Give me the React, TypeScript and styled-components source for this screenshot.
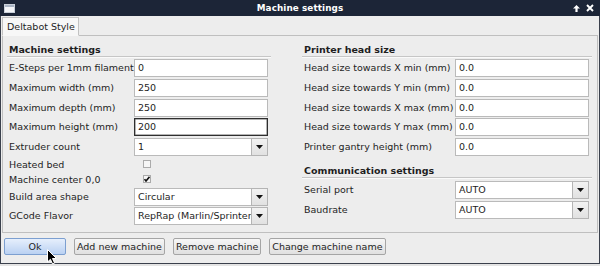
import styled, { createGlobalStyle, css } from 'styled-components'

const GlobalStyle = createGlobalStyle`
  html, body {
    margin: 0;
    padding: 0;
    background: #e4e4e4;
  }
  body {
    font-family: "DejaVu Sans", "Liberation Sans", sans-serif;
  }
`

const Window = styled.div`
  position: relative;
  width: 600px;
  height: 264px;
  display: flex;
  flex-direction: column;
  overflow: hidden;
`

const TitleBar = styled.div`
  height: 16px;
  flex: none;
  background: #1c2537;
  display: flex;
  align-items: center;
  justify-content: space-between;
  padding: 0 6px 0 4px;
  box-sizing: border-box;
  color: #fff;
`

const Title = styled.div`
  position: absolute;
  left: 0;
  right: 0;
  top: 0;
  height: 16px;
  line-height: 16px;
  text-align: center;
  font-size: 8.8px;
  font-weight: bold;
  letter-spacing: 0.1px;
  pointer-events: none;
`

const TitleButtons = styled.div`
  display: flex;
  align-items: center;
  gap: 6px;
`

const Body = styled.div`
  flex: 1;
  background: #ededed;
  border: 1px solid #3a404c;
  border-top: none;
  padding: 0 1px;
  display: flex;
  flex-direction: column;
`

const TabBar = styled.div`
  height: 19px;
  display: flex;
  align-items: flex-end;
  position: relative;
  z-index: 1;
`

const Tab = styled.div`
  height: 19px;
  box-sizing: border-box;
  padding: 0 3px 0 4px;
  background: #f7f7f7;
  border: 1px solid #c2c2c2;
  border-bottom: 1px solid #f7f7f7;
  margin-bottom: -1px;
  font-size: 9.5px;
  line-height: 18px;
  color: #1e1e1e;
`

const Panel = styled.div`
  height: 198px;
  box-sizing: border-box;
  border: 1px solid #bfbfbf;
  padding: 7px 5px 0 4px;
  display: grid;
  grid-template-columns: 264px 290px;
  column-gap: 31px;
  align-items: start;
`

const Column = styled.div`
  display: flex;
  flex-direction: column;
`

const Heading = styled.div<{ $spaced?: boolean }>`
  font-size: 9.5px;
  font-weight: bold;
  line-height: 13px;
  color: #1e1e1e;
  padding-left: 2px;
  border-bottom: 1px solid #c6c6c6;
  box-shadow: 0 1px 0 #fafafa;
  margin-top: ${p => (p.$spaced ? '8px' : '0')};
`

const Rows = styled.div<{ $labelWidth: number; $top?: number }>`
  display: grid;
  grid-template-columns: ${p => p.$labelWidth}px 134px;
  row-gap: 1.8px;
  margin-top: ${p => p.$top ?? 2}px;
`

const Label = styled.div<{ $short?: boolean }>`
  font-size: 9.5px;
  color: #1e1e1e;
  padding-left: 2px;
  height: ${p => (p.$short ? 13 : 18)}px;
  line-height: ${p => (p.$short ? 13 : 18)}px;
  white-space: nowrap;
`

const Field = styled.div<{ $focused?: boolean }>`
  height: 18px;
  box-sizing: border-box;
  background: #fff;
  border: 1px solid #bababa;
  padding-left: 3px;
  font-size: 9.5px;
  line-height: 16px;
  color: #1e1e1e;
  white-space: nowrap;
  overflow: hidden;
  ${p =>
    p.$focused &&
    css`
      border-color: #2e2e2e;
      box-shadow: inset 0 0 0 0.5px #6a6a6a;
    `}
`

const SelectBox = styled.div`
  display: flex;
  height: 18px;
`

const SelectValue = styled(Field)`
  flex: 1;
  min-width: 0;
  border-right: none;
`

const SelectButton = styled.div`
  width: 17px;
  box-sizing: border-box;
  border: 1px solid #b4b4b4;
  background: linear-gradient(#f2f2f2, #e1e1e1);
  display: flex;
  align-items: center;
  justify-content: center;
`

const CheckCell = styled.div`
  height: 13px;
  display: flex;
  align-items: center;
  padding-left: 9px;
`

const Check = styled.div`
  width: 8px;
  height: 8px;
  box-sizing: border-box;
  border: 1px solid #ababab;
  background: #f6f6f6;
  display: flex;
  align-items: center;
  justify-content: center;
`

const ButtonRow = styled.div`
  display: flex;
  gap: 8px;
  padding: 5px 2px 0;
`

const Button = styled.div<{ $primary?: boolean }>`
  height: 17px;
  box-sizing: border-box;
  padding: 0 2px;
  min-width: ${p => (p.$primary ? '62px' : '0')};
  text-align: center;
  font-size: 9.5px;
  line-height: 15px;
  color: #1e1e1e;
  border-radius: 2px;
  border: 1px solid #a5a5a5;
  background: linear-gradient(#f6f6f6, #e0e0e0);
  white-space: nowrap;
  ${p =>
    p.$primary &&
    css`
      border-color: #7c9fd0;
      background: linear-gradient(#e6effc, #bad1f2);
    `}
`

const Cursor = styled.svg`
  position: absolute;
  left: 47px;
  top: 249px;
`

function Arrow() {
  return (
    <svg width="7" height="4" viewBox="0 0 7 4">
      <path d="M0 0 H7 L3.5 4 Z" fill="#111" />
    </svg>
  )
}

function Select({ value }: { value: string }) {
  return (
    <SelectBox>
      <SelectValue>{value}</SelectValue>
      <SelectButton>
        <Arrow />
      </SelectButton>
    </SelectBox>
  )
}

function CheckBox({ checked }: { checked?: boolean }) {
  return (
    <CheckCell>
      <Check>
        {checked && (
          <svg width="6" height="6" viewBox="0 0 6 6">
            <path d="M0.5 3.2 L2 5 L5.5 0.8" stroke="#111" strokeWidth="1.6" fill="none" />
          </svg>
        )}
      </Check>
    </CheckCell>
  )
}

const machineFields = [
  { label: 'E-Steps per 1mm filament', value: '0' },
  { label: 'Maximum width (mm)', value: '250' },
  { label: 'Maximum depth (mm)', value: '250' },
  { label: 'Maximum height (mm)', value: '200', focused: true },
]

const headFields = [
  { label: 'Head size towards X min (mm)', value: '0.0' },
  { label: 'Head size towards Y min (mm)', value: '0.0' },
  { label: 'Head size towards X max (mm)', value: '0.0' },
  { label: 'Head size towards Y max (mm)', value: '0.0' },
  { label: 'Printer gantry height (mm)', value: '0.0' },
]

export default function App() {
  return (
    <>
      <GlobalStyle />
      <Window>
        <TitleBar>
          <svg width="11" height="9" viewBox="0 0 11 9">
            <rect x="0.5" y="0.5" width="10" height="8" fill="#f4f6f9" stroke="#c9d0da" />
            <rect x="1" y="1" width="9" height="2" fill="#a9b4c4" />
          </svg>
          <Title>Machine settings</Title>
          <TitleButtons>
            <svg width="7" height="7" viewBox="0 0 7 7">
              <path d="M3.5 0 L7 3.5 H4.6 V7 H2.4 V3.5 H0 Z" fill="#fff" />
            </svg>
            <svg width="8" height="8" viewBox="0 0 8 8">
              <path d="M1 1 L7 7 M7 1 L1 7" stroke="#fff" strokeWidth="1.9" />
            </svg>
          </TitleButtons>
        </TitleBar>
        <Body>
          <TabBar>
            <Tab>Deltabot Style</Tab>
          </TabBar>
          <Panel>
            <Column>
              <Heading>Machine settings</Heading>
              <Rows $labelWidth={127}>
                {machineFields.map(f => (
                  <>
                    <Label key={f.label}>{f.label}</Label>
                    <Field key={f.label + '-v'} $focused={f.focused}>
                      {f.value}
                    </Field>
                  </>
                ))}
                <Label>Extruder count</Label>
                <Select value="1" />
                <Label $short>Heated bed</Label>
                <CheckBox />
                <Label $short>Machine center 0,0</Label>
                <CheckBox checked />
                <Label>Build area shape</Label>
                <Select value="Circular" />
                <Label>GCode Flavor</Label>
                <Select value="RepRap (Marlin/Sprinter)" />
              </Rows>
            </Column>
            <Column>
              <Heading>Printer head size</Heading>
              <Rows $labelWidth={153}>
                {headFields.map(f => (
                  <>
                    <Label key={f.label}>{f.label}</Label>
                    <Field key={f.label + '-v'}>{f.value}</Field>
                  </>
                ))}
              </Rows>
              <Heading $spaced>Communication settings</Heading>
              <Rows $labelWidth={153} $top={3}>
                <Label>Serial port</Label>
                <Select value="AUTO" />
                <Label>Baudrate</Label>
                <Select value="AUTO" />
              </Rows>
            </Column>
          </Panel>
          <ButtonRow>
            <Button $primary>Ok</Button>
            <Button>Add new machine</Button>
            <Button>Remove machine</Button>
            <Button>Change machine name</Button>
          </ButtonRow>
        </Body>
        <Cursor width="11" height="16" viewBox="0 0 11 16">
          <path d="M0.5 0.5 V13 L3.4 10.3 L5.6 15 L7.6 14.1 L5.5 9.5 H9.5 Z" fill="#000" stroke="#fff" strokeWidth="1" />
        </Cursor>
      </Window>
    </>
  )
}
